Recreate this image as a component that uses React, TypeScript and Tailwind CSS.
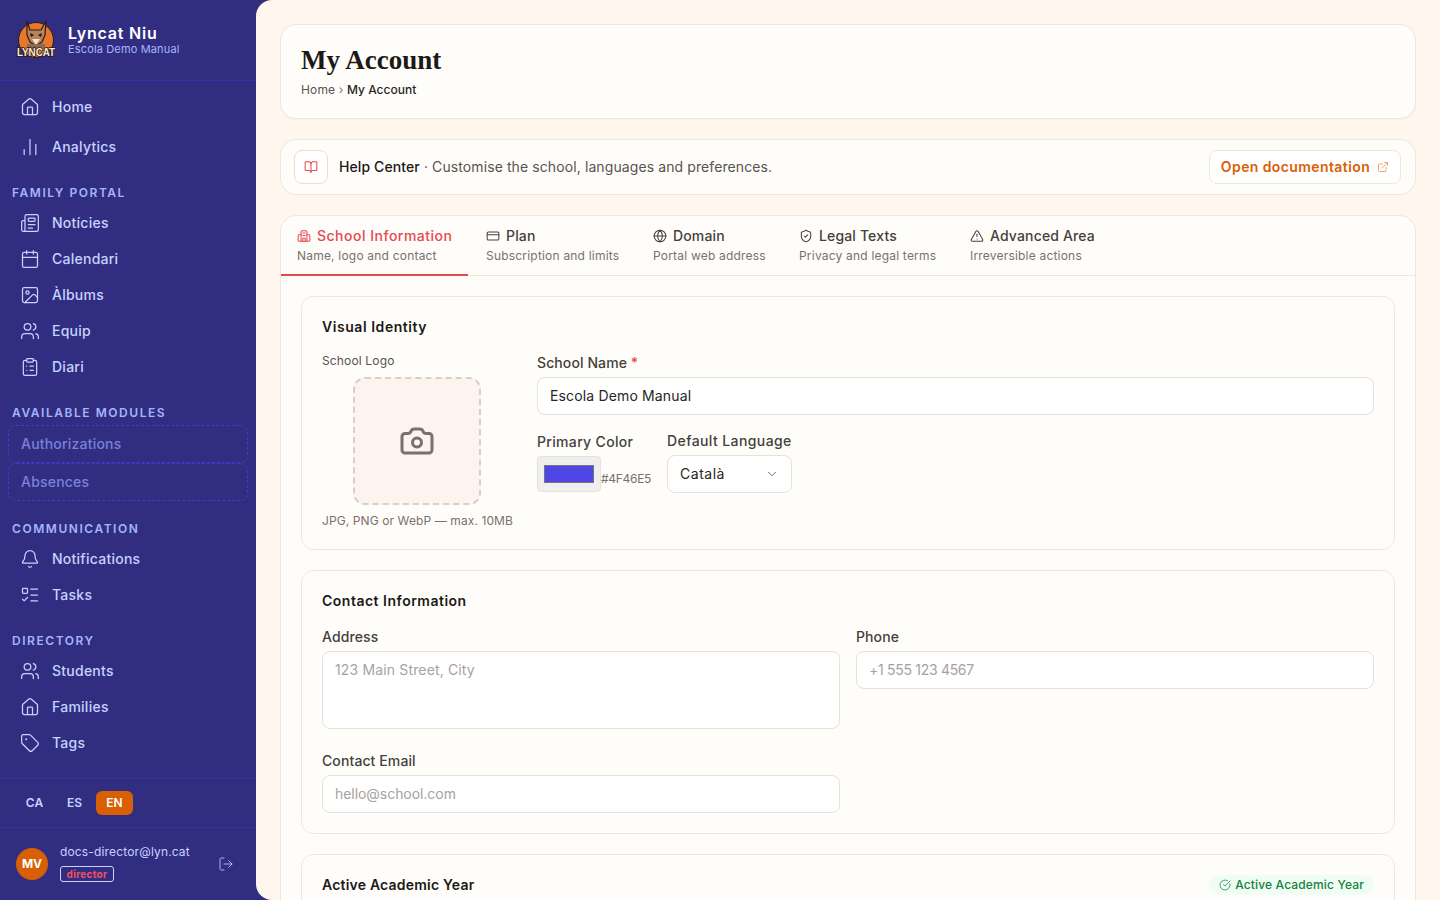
import {
  Bell, BookOpen, Calendar, Camera, ChartNoAxesColumn, ChevronDown, CircleCheckBig, ClipboardList, CreditCard, ExternalLink,
  Globe, House, Image, ListTodo, LogOut, Newspaper, ShieldCheck, Tag, TriangleAlert, Users,
} from "lucide-react";
import type { ComponentType, ReactNode } from "react";

type IconType = ComponentType<{ className?: string; strokeWidth?: number }>;

function SchoolIcon({ className, strokeWidth }: { className?: string; strokeWidth?: number }) {
  return (
    <svg viewBox="0 0 24 24" fill="none" stroke="currentColor" strokeWidth={strokeWidth} strokeLinecap="round" strokeLinejoin="round" className={className}>
      <path d="M7 21V5a2 2 0 0 1 2-2h6a2 2 0 0 1 2 2v16" />
      <path d="M7 10H4a2 2 0 0 0-2 2v7a2 2 0 0 0 2 2h16a2 2 0 0 0 2-2v-7a2 2 0 0 0-2-2h-3" />
      <path d="M10 7h4M10 11h4M10 21v-5h4v5" />
    </svg>
  );
}

function NavItem({ icon: Icon, label, tall }: { icon: IconType; label: string; tall?: boolean }) {
  return (
    <div className={`flex items-center gap-3 px-5 text-[14px] tracking-[0.25px] text-[#c7d2fe] ${tall ? "h-10" : "h-9"}`}>
      <Icon className="h-5 w-5 shrink-0" strokeWidth={1.5} />
      <span className="pb-[2px] font-medium">{label}</span>
    </div>
  );
}

function NavHeading({ children, className = "mb-[3px] mt-[19px]" }: { children: ReactNode; className?: string }) {
  return <div className={`h-[18px] px-3 text-[12px] leading-[18px] font-semibold tracking-[1.55px] text-[#a5b4fc] ${className}`}>{children}</div>;
}

function LockedItem({ label }: { label: string }) {
  return (
    <div className="mx-2 flex h-[38px] items-center rounded-lg border border-dashed border-[#4338ca] px-3 pb-[2px] text-[14px] font-medium tracking-[0.2px] text-[#7b80dd]">
      {label}
    </div>
  );
}

function Logo() {
  return (
    <svg viewBox="0 0 42 42" className="h-[42px] w-[42px] shrink-0">
      <circle cx="21" cy="21" r="17.500" fill="#e8772e" stroke="#2b1a12" strokeWidth="1" />
      <path d="M12 2l3 9h11l5-9-1 14-3 7-6 4-6-4-3-7z" fill="#b9825a" stroke="#2b1a12" strokeWidth="1.200" strokeLinejoin="round" />
      <path d="M15 14l4 2-3 2zM27 14l-4 2 3 2z" fill="#1f1410" />
      <path d="M17 20h8l-4 6z" fill="#f6e2cb" />
      <path d="M12 25h18v5H12z" fill="#8a6a50" />
      <text x="21" y="37" textAnchor="middle" fontFamily="Liberation Sans, sans-serif" fontSize="10.500" fontWeight="700" fill="#fdecd6" stroke="#2b1a12" strokeWidth="1.600" paintOrder="stroke" textLength="38" lengthAdjust="spacingAndGlyphs">LYNCAT</text>
    </svg>
  );
}

function Sidebar() {
  return (
    <aside className="flex h-screen w-[256px] shrink-0 flex-col bg-[#312e81]">
      <div className="flex h-[81px] shrink-0 items-center gap-[11px] border-b border-[#3730a3] pl-[15px]">
        <Logo />
        <div>
          <div className="text-[16px] leading-[18px] font-semibold tracking-[0.8px] text-white">Lyncat Niu</div>
          <div className="text-[11px] leading-[15px] tracking-[0.15px] text-[#a5b4fc]">Escola Demo Manual</div>
        </div>
      </div>
      <nav className="flex-1 pt-[6px]">
        <NavItem tall icon={House} label="Home" />
        <NavItem tall icon={ChartNoAxesColumn} label="Analytics" />
        <NavHeading className="mb-[3px] mt-[17px]">FAMILY PORTAL</NavHeading>
        <NavItem icon={Newspaper} label="Notícies" />
        <NavItem icon={Calendar} label="Calendari" />
        <NavItem icon={Image} label="Àlbums" />
        <NavItem icon={Users} label="Equip" />
        <NavItem icon={ClipboardList} label="Diari" />
        <NavHeading>AVAILABLE MODULES</NavHeading>
        <LockedItem label="Authorizations" />
        <LockedItem label="Absences" />
        <NavHeading>COMMUNICATION</NavHeading>
        <NavItem icon={Bell} label="Notifications" />
        <NavItem icon={ListTodo} label="Tasks" />
        <NavHeading>DIRECTORY</NavHeading>
        <NavItem icon={Users} label="Students" />
        <NavItem icon={House} label="Families" />
        <NavItem icon={Tag} label="Tags" />
      </nav>
      <div className="flex h-[50px] shrink-0 items-center gap-[3px] border-t border-b border-[#3730a3] px-4 text-[12px] font-semibold text-[#c7d2fe]">
        <span className="w-[37px] text-center">CA</span>
        <span className="w-[37px] text-center">ES</span>
        <span className="flex h-6 w-[37px] items-center justify-center rounded-md bg-[#d95f04] text-white">EN</span>
      </div>
      <div className="flex h-[72px] shrink-0 items-center pl-4 pr-[22px]">
        <div className="flex h-8 w-8 items-center justify-center rounded-full bg-[#d95f04] text-[12px] font-bold text-white">MV</div>
        <div className="ml-3 flex-1 pb-[2px]">
          <div className="text-[12px] leading-[16px] tracking-[0.15px] text-[#c7d2fe]">docs-director@lyn.cat</div>
          <div className="mt-[6px] flex h-4 w-[54px] items-center justify-center rounded-[3px] border border-[#c7d2fe] text-[10px] font-bold tracking-[0.3px] text-[#f0525e]">director</div>
        </div>
        <LogOut className="h-4 w-4 text-[#a5b4fc]" strokeWidth={1.5} />
      </div>
    </aside>
  );
}

function Tab({ icon: Icon, title, sub, active, className }: { icon: IconType; title: string; sub: string; active?: boolean; className: string }) {
  return (
    <div className={`flex h-[60px] flex-col pt-[10px] ${active ? "border-b-2 border-[#e5484d]" : ""} ${className}`}>
      <div className={`flex items-center gap-[6px] text-[14px] leading-[20px] font-medium ${active ? "tracking-[0.5px] text-[#e5484d]" : "tracking-[0.15px] text-[#44403c]"}`}>
        <Icon className="h-[14px] w-[14px]" strokeWidth={1.75} />
        {title}
      </div>
      <div className="mt-[2px] text-[12px] leading-[16px] tracking-[0.2px] text-[#78716c]">{sub}</div>
    </div>
  );
}

function Field({ label, children, required }: { label: string; children: ReactNode; required?: boolean }) {
  return (
    <div>
      <div className="mb-1 text-[14px] leading-[20px] font-medium tracking-[0.1px] text-[#44403c]">
        {label}
        {required && <span className="text-[#e5484d]"> *</span>}
      </div>
      {children}
    </div>
  );
}

const inputClass =
  "block w-full rounded-lg border border-[#e7e1dc] bg-white px-3 text-[14px] text-[#292524] outline-none placeholder:text-[#a8a29e]";

export default function App() {
  return (
    <div className="flex h-screen overflow-hidden bg-[#312e81] font-['Inter','Noto_Sans',sans-serif]">
      <Sidebar />
      <main className="h-screen flex-1 overflow-hidden rounded-l-[16px] bg-[#fff7ed] p-6">
        <div className="h-[95px] rounded-2xl border border-[#eee6e0] bg-[#fffdfa] px-5 pt-[19px] shadow-[0_1px_2px_rgba(0,0,0,0.03)]">
          <h1 className="font-['Liberation_Serif',serif] text-[27px] leading-[32px] font-bold text-[#1c1917]">My Account</h1>
          <div className="mt-[6px] text-[12px] leading-[16px] tracking-[0.15px] text-[#57534e]">
            Home <span className="text-[#78716c]">›</span> <span className="font-medium tracking-normal text-[#292524]">My Account</span>
          </div>
        </div>

        <div className="mt-5 flex h-[56px] items-center rounded-2xl border border-[#eee6e0] bg-[#fffdfa] pl-[13px] pr-[14px]">
          <div className="flex h-[34px] w-[34px] items-center justify-center rounded-lg border border-[#f3d9cc] bg-white">
            <BookOpen className="h-[14px] w-[14px] text-[#e5484d]" strokeWidth={1.75} />
          </div>
          <div className="ml-[11px] flex-1 pb-[2px] text-[14px] tracking-[0.1px] text-[#57534e]">
            <span className="font-medium text-[#1c1917]">Help Center</span> · Customise the school, languages and preferences.
          </div>
          <div className="flex h-[34px] w-[192px] items-center justify-center gap-[7px] rounded-lg border border-[#eee6e0] bg-white text-[14px] font-semibold tracking-[0.4px] text-[#d95f04]">
            <span className="pb-[2px]">Open documentation</span>
            <ExternalLink className="h-3 w-3 text-[#ea8a4a]" strokeWidth={1.5} />
          </div>
        </div>

        <div className="mt-5 rounded-2xl border border-[#eee6e0] bg-[#fffdfa]">
          <div className="flex h-[60px] border-b border-[#eee6e0]">
            <Tab active icon={SchoolIcon} title="School Information" sub="Name, logo and contact" className="w-[187px] pl-4" />
            <Tab icon={CreditCard} title="Plan" sub="Subscription and limits" className="w-[167px] pl-[18px]" />
            <Tab icon={Globe} title="Domain" sub="Portal web address" className="w-[146px] pl-[18px]" />
            <Tab icon={ShieldCheck} title="Legal Texts" sub="Privacy and legal terms" className="w-[171px] pl-[18px]" />
            <Tab icon={TriangleAlert} title="Advanced Area" sub="Irreversible actions" className="w-[160px] pl-[18px]" />
          </div>

          <div className="flex flex-col gap-5 p-5">
            <section className="h-[254px] rounded-xl border border-[#eee6e0] bg-[#fffdfa] px-5 pt-5">
              <h2 className="text-[14px] leading-[20px] font-semibold tracking-[0.55px] text-[#1c1917]">Visual Identity</h2>
              <div className="mt-4 flex gap-6">
                <div className="w-[191px] shrink-0">
                  <div className="text-[12px] leading-[16px] tracking-[0.15px] text-[#57534e]">School Logo</div>
                  <div className="ml-[31px] mt-2 flex h-[128px] w-[128px] items-center justify-center rounded-xl border-2 border-dashed border-[#d6d0ca] bg-[#fdf4ef]">
                    <Camera className="h-9 w-9 text-[#78716c]" strokeWidth={2} />
                  </div>
                  <div className="mt-2 text-[12px] leading-[16px] tracking-[0.1px] whitespace-nowrap text-[#78716c]">JPG, PNG or WebP — max. 10MB</div>
                </div>
                <div className="flex-1">
                  <Field required label="School Name">
                    <input readOnly value="Escola Demo Manual" className={`${inputClass} h-[38px] pb-[2px] tracking-[0.15px]`} />
                  </Field>
                  <div className="mt-[17px] flex items-start gap-4">
                    <div>
                      <div className="mb-1 text-[14px] leading-[20px] font-medium tracking-[0.33px] text-[#44403c]">Primary Color</div>
                      <div className="flex items-end">
                        <input
                          readOnly
                          type="color"
                          value="#4f46e5"
                          className="h-9 w-16 rounded border border-[#e7e1dc] bg-[#efefef] p-1 [&::-webkit-color-swatch]:border [&::-webkit-color-swatch]:border-[#767676]"
                        />
                        <span className="mb-[5px] text-[12px] leading-[16px] tracking-[-0.3px] text-[#78716c]">#4F46E5</span>
                      </div>
                    </div>
                    <div className="-mt-[1px]">
                      <div className="mb-1 text-[14px] leading-[20px] font-medium tracking-[0.4px] text-[#44403c]">Default Language</div>
                      <div className="flex h-[38px] w-[125px] items-center justify-between rounded-lg border border-[#e7e1dc] bg-white pl-3 pr-3 pb-[1px] text-[14px] tracking-[0.5px] text-[#292524]">
                        Català
                        <ChevronDown className="h-[14px] w-[14px] text-[#57534e]" strokeWidth={1.5} />
                      </div>
                    </div>
                  </div>
                </div>
              </div>
            </section>

            <section className="h-[264px] rounded-xl border border-[#eee6e0] bg-[#fffdfa] px-5 pt-5">
              <h2 className="text-[14px] leading-[20px] font-semibold tracking-[0.5px] text-[#1c1917]">Contact Information</h2>
              <div className="mt-4 grid grid-cols-2 gap-4">
                <div>
                  <Field label="Address">
                    <textarea readOnly placeholder="123 Main Street, City" className={`${inputClass} h-[78px] resize-none py-[7px] tracking-[0.15px]`} />
                  </Field>
                  <div className="mt-[22px]">
                    <Field label="Contact Email">
                      <input readOnly placeholder="hello@school.com" className={`${inputClass} h-[38px] pb-[2px] tracking-[-0.05px]`} />
                    </Field>
                  </div>
                </div>
                <Field label="Phone">
                  <input readOnly placeholder="+1 555 123 4567" className={`${inputClass} h-[38px] pb-[2px] tracking-[-0.3px]`} />
                </Field>
              </div>
            </section>

            <section className="h-[120px] rounded-xl border border-[#eee6e0] bg-[#fffdfa] px-5 pt-5">
              <div className="flex items-center justify-between">
                <h2 className="text-[14px] leading-[20px] font-semibold tracking-[0.2px] text-[#1c1917]">Active Academic Year</h2>
                <div className="flex h-[20px] items-center gap-1 rounded-full bg-[#f0fdf4] px-[10px] text-[12px] font-medium tracking-[0.15px] text-[#15803d]">
                  <CircleCheckBig className="h-3 w-3" strokeWidth={1.5} />
                  Active Academic Year
                </div>
              </div>
            </section>
          </div>
        </div>
      </main>
    </div>
  );
}
